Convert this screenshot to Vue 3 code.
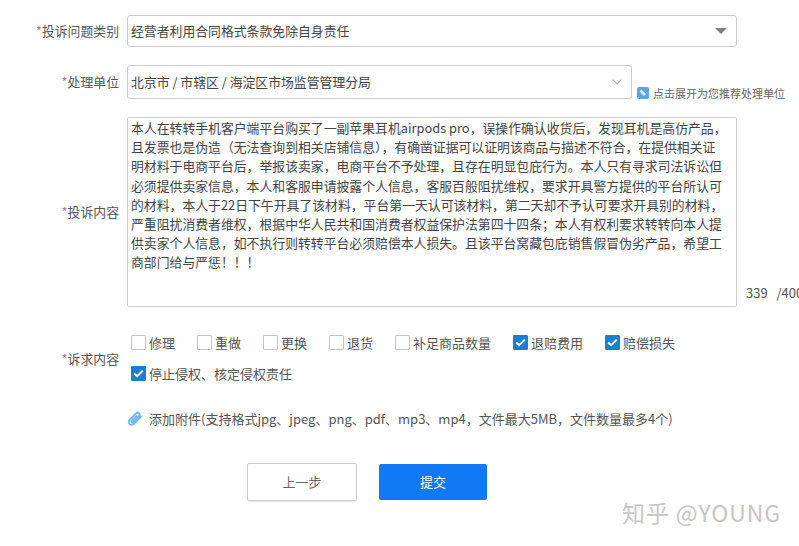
<script setup>
const issueLines = [
  '本人在转转手机客户端平台购买了一副苹果耳机airpods pro，误操作确认收货后，发现耳机是高仿产品，',
  '且发票也是伪造（无法查询到相关店铺信息），有确凿证据可以证明该商品与描述不符合，在提供相关证',
  '明材料于电商平台后，举报该卖家，电商平台不予处理，且存在明显包庇行为。本人只有寻求司法诉讼但',
  '必须提供卖家信息，本人和客服申请披露个人信息，客服百般阻扰维权，要求开具警方提供的平台所认可',
  '的材料，本人于22日下午开具了该材料，平台第一天认可该材料，第二天却不予认可要求开具别的材料，',
  '严重阻扰消费者维权，根据中华人民共和国消费者权益保护法第四十四条；本人有权利要求转转向本人提',
  '供卖家个人信息，如不执行则转转平台必须赔偿本人损失。且该平台窝藏包庇销售假冒伪劣产品，希望工',
  '商部门给与严惩！！！'
]
const demands = [
  { text: '修理', on: false },
  { text: '重做', on: false },
  { text: '更换', on: false },
  { text: '退货', on: false },
  { text: '补足商品数量', on: false },
  { text: '退赔费用', on: true },
  { text: '赔偿损失', on: true },
  { text: '停止侵权、核定侵权责任', on: true }
]
</script>

<template>
  <div class="page">
    <div class="row row-type">
      <div class="label"><i>*</i>投诉问题类别</div>
      <div class="select select-wide">
        <span>经营者利用合同格式条款免除自身责任</span>
        <span class="caret"></span>
      </div>
    </div>

    <div class="row row-unit">
      <div class="label"><i>*</i>处理单位</div>
      <div class="select select-unit">
        <span>北京市 / 市辖区 / 海淀区市场监管管理分局</span>
        <svg class="chevron" width="10" height="6" viewBox="0 0 10 6">
          <path d="M.7.7 5 5l4.3-4.3" fill="none" stroke="#aaa" stroke-width="1.2" />
        </svg>
      </div>
      <div class="hint">
        <svg width="12" height="12" viewBox="0 0 12 12">
          <rect width="12" height="12" rx="2" fill="#5aa5e6" />
          <path d="M3.500 3.500 8 8" fill="none" stroke="#e2f0fb" stroke-width="2.600" />
        </svg>
        <span>点击展开为您推荐处理单位</span>
      </div>
    </div>

    <div class="row row-content">
      <div class="label"><i>*</i>投诉内容</div>
      <div class="textarea">
        <div v-for="line in issueLines" :key="line">{{ line }}</div>
      </div>
      <div class="count">339&nbsp;&nbsp;&nbsp;/400</div>
    </div>

    <div class="row row-demand">
      <div class="label"><i>*</i>诉求内容</div>
      <div class="checks">
        <div v-for="d in demands" :key="d.text" class="check">
          <span class="box" :class="{ on: d.on }">
            <svg v-if="d.on" width="11" height="9" viewBox="0 0 11 9">
              <path d="M1.2 4.400 4.200 7.200 9.800 1.600" fill="none" stroke="#fff" stroke-width="2" />
            </svg>
          </span>
          <span>{{ d.text }}</span>
        </div>
      </div>
    </div>

    <div class="attach">
      <svg width="16" height="16" viewBox="0 0 16 16">
        <path d="M14.500 5 7 12.500c-1.500 1.500-3.300 1.500-4.500.4-1.200-1.200-1-3 .4-4.400L9 2.400c1-1 2.300-1 3.100-.2.800.8.800 2-.2 3L6.200 10.800c-.5.500-1.100.5-1.500.1-.4-.4-.3-1 .2-1.500L10 4.300" fill="none" stroke="#6db9e8" stroke-width="1.800" />
      </svg>
      <span>添加附件(支持格式jpg、jpeg、png、pdf、mp3、mp4，文件最大5MB，文件数量最多4个)</span>
    </div>

    <div class="actions">
      <div class="btn btn-prev">上一步</div>
      <div class="btn btn-submit">提交</div>
    </div>

    <div class="mark">知乎 @YOUNG</div>
  </div>
</template>

<style scoped>
.page {
  position: relative;
  width: 799px;
  height: 546px;
  overflow: hidden;
  box-sizing: border-box;
  padding-top: 15px;
  background: #fff;
  color: #555;
  font: 13px/19.2px "Noto Sans CJK SC", "Liberation Sans", sans-serif;
}
.row {
  display: flex;
  align-items: center;
}
.row-unit {
  margin-top: 18px;
}
.row-content {
  margin-top: 18px;
}
.row-demand {
  margin-top: 26px;
}
.label {
  flex: none;
  width: 119px;
  margin-right: 8px;
  text-align: right;
  font-size: 12.850px;
  color: #555;
}
.label i {
  font-style: normal;
  color: #c9666f;
}
.select {
  flex: none;
  display: flex;
  align-items: center;
  justify-content: space-between;
  box-sizing: border-box;
  padding: 0 9px 0 3px;
  border: 1px solid #ccc;
  border-radius: 3px;
  font-size: 12.850px;
  color: #444;
}
.select-wide {
  width: 610px;
  height: 32px;
}
.select-unit {
  width: 505px;
  height: 34px;
}
.caret {
  width: 0;
  height: 0;
  border-style: solid;
  border-width: 6px 6px 0;
  border-color: #808080 transparent transparent;
}
.hint {
  display: flex;
  align-items: center;
  gap: 4px;
  align-self: flex-end;
  margin-left: 5px;
  margin-bottom: -1px;
  font-size: 11px;
  line-height: 14px;
  color: #666;
  white-space: nowrap;
}
.textarea {
  flex: none;
  box-sizing: border-box;
  width: 610px;
  height: 190px;
  padding: 0 3px;
  border: 1px solid #ccc;
  border-radius: 2px;
  font-size: 12.850px;
  color: #444;
  white-space: nowrap;
}
.count {
  flex: none;
  align-self: flex-end;
  margin: 0 0 5px 9px;
  white-space: nowrap;
  color: #555;
}
.checks {
  display: flex;
  flex-wrap: wrap;
  width: 606px;
  margin-left: 4px;
  column-gap: 22px;
  row-gap: 12px;
}
.check {
  display: flex;
  align-items: center;
  gap: 3px;
  white-space: nowrap;
}
.box {
  display: flex;
  align-items: center;
  justify-content: center;
  box-sizing: border-box;
  width: 15px;
  height: 15px;
  border: 1px solid #c4c4c4;
  border-radius: 1px;
  background: #fff;
}
.box.on {
  border-color: #1b7fd0;
  background: #1b7fd0;
}
.attach {
  display: flex;
  align-items: center;
  gap: 6px;
  margin: 26px 0 0 127px;
  color: #555;
  white-space: nowrap;
}
.actions {
  display: flex;
  align-items: center;
  gap: 22px;
  margin: 34px 0 0 247px;
}
.btn {
  display: flex;
  align-items: center;
  justify-content: center;
  box-sizing: border-box;
  border-radius: 2px;
}
.btn-prev {
  width: 110px;
  height: 38px;
  border: 1px solid #ccc;
  color: #666;
  box-shadow: 0 1px 1px #e6e6e6;
}
.btn-submit {
  width: 108px;
  height: 36px;
  background: #1279f5;
  color: #fff;
}
.mark {
  position: absolute;
  left: 622px;
  top: 496px;
  font-size: 23px;
  line-height: 32px;
  letter-spacing: 0.9px;
  color: #c6c6c6;
  white-space: nowrap;
}
</style>
